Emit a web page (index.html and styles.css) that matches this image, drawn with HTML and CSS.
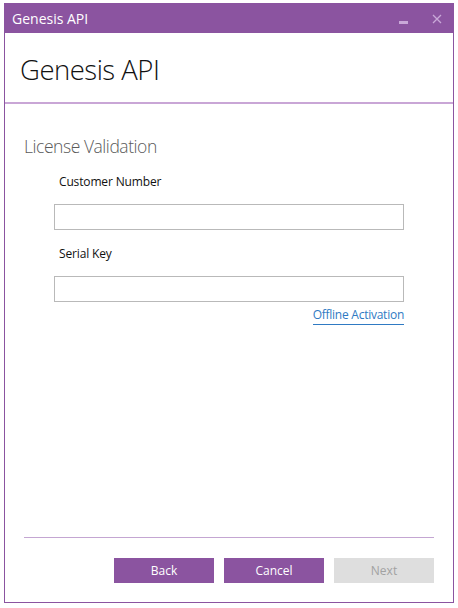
FILE: index.html
```html
<!DOCTYPE html>
<html>
<head>
<meta charset="utf-8">
<link rel="stylesheet" href="styles.css">
</head>
<body>
<div class="window">
  <div class="titlebar">
    <span class="title">Genesis API</span>
    <div class="controls">
      <span class="min"></span>
      <svg class="close" width="10" height="10" viewBox="0 0 10 10"><path d="M1 1 L9 9 M9 1 L1 9" stroke="#c9a8d8" stroke-width="1.3" fill="none"/></svg>
    </div>
  </div>
  <div class="header">
    <h1 class="app-name">Genesis API</h1>
  </div>
  <div class="content">
    <h2 class="section">License Validation</h2>
    <div class="form">
      <label class="label">Customer Number</label>
      <div class="input"></div>
      <label class="label second">Serial Key</label>
      <div class="input"></div>
      <div class="link-row"><a class="link">Offline Activation</a></div>
    </div>
  </div>
  <div class="footer">
    <div class="sep"></div>
    <div class="buttons">
      <button class="btn">Back</button>
      <button class="btn">Cancel</button>
      <button class="btn disabled">Next</button>
    </div>
  </div>
</div>
</body>
</html>
```
FILE: styles.css
```css
* { box-sizing: border-box; }
body {
  margin: 0;
  background: #ffffff;
  font-family: "Open Sans", "Noto Sans", sans-serif;
}
.window {
  margin: 3px 0 0 4px;
  width: 450px;
  height: 600px;
  border: 1px solid #8b54a0;
  border-top: none;
  display: flex;
  flex-direction: column;
  background: #fff;
}
.titlebar {
  height: 30px;
  margin: 0 -1px;
  background: #8b54a0;
  display: flex;
  align-items: center;
  justify-content: space-between;
  padding: 0 12px 0 8px;
}
.title {
  color: #fff;
  font-size: 14px;
  line-height: 30px;
  padding-top: 1px;
}
.controls {
  display: flex;
  align-items: center;
  gap: 24px;
  padding-top: 2px;
}
.min {
  display: block;
  width: 9px;
  height: 3px;
  background: #c9a8d8;
  margin-top: 7px;
}
.close { display: block; }
.header {
  height: 71px;
  border-bottom: 2px solid #c9a6d6;
  padding: 19px 0 0 15px;
}
.app-name {
  margin: 0;
  font-weight: 300;
  font-size: 27.5px;
  letter-spacing: -0.5px;
  line-height: 36px;
  color: #111;
}
.content {
  padding: 30px 19px 0 19px;
}
.section {
  margin: 0;
  font-weight: 300;
  font-size: 17.5px;
  letter-spacing: -0.45px;
  line-height: 24px;
  color: #5a5a5a;
}
.form {
  margin: 16px 30px 0 30px;
  display: flex;
  flex-direction: column;
}
.label {
  display: block;
  font-size: 12px;
  letter-spacing: -0.15px;
  line-height: 16px;
  color: #111;
  padding-left: 5px;
}
.label.second { margin-top: 16px; }
.input {
  margin-top: 14px;
  height: 26px;
  border: 1px solid #b9b9b9;
  background: #fff;
}
.link-row {
  display: flex;
  justify-content: flex-end;
  margin-top: 5px;
}
.link {
  font-size: 12px;
  letter-spacing: -0.25px;
  line-height: 16px;
  color: #2f7ac3;
  border-bottom: 1px solid #2f7ac3;
  padding-bottom: 1px;
}
.footer {
  margin-top: auto;
  padding: 0 19px 19px 19px;
}
.sep {
  height: 1px;
  background: #c4a6d2;
}
.buttons {
  display: flex;
  justify-content: flex-end;
  gap: 10px;
  margin-top: 20px;
}
.btn {
  width: 100px;
  height: 25px;
  border: none;
  background: #8b54a0;
  color: #fff;
  font-family: "Open Sans", "Noto Sans", sans-serif;
  font-size: 12px;
  padding: 0;
}
.btn.disabled {
  background: #dedede;
  color: #a2a2a2;
}
```
